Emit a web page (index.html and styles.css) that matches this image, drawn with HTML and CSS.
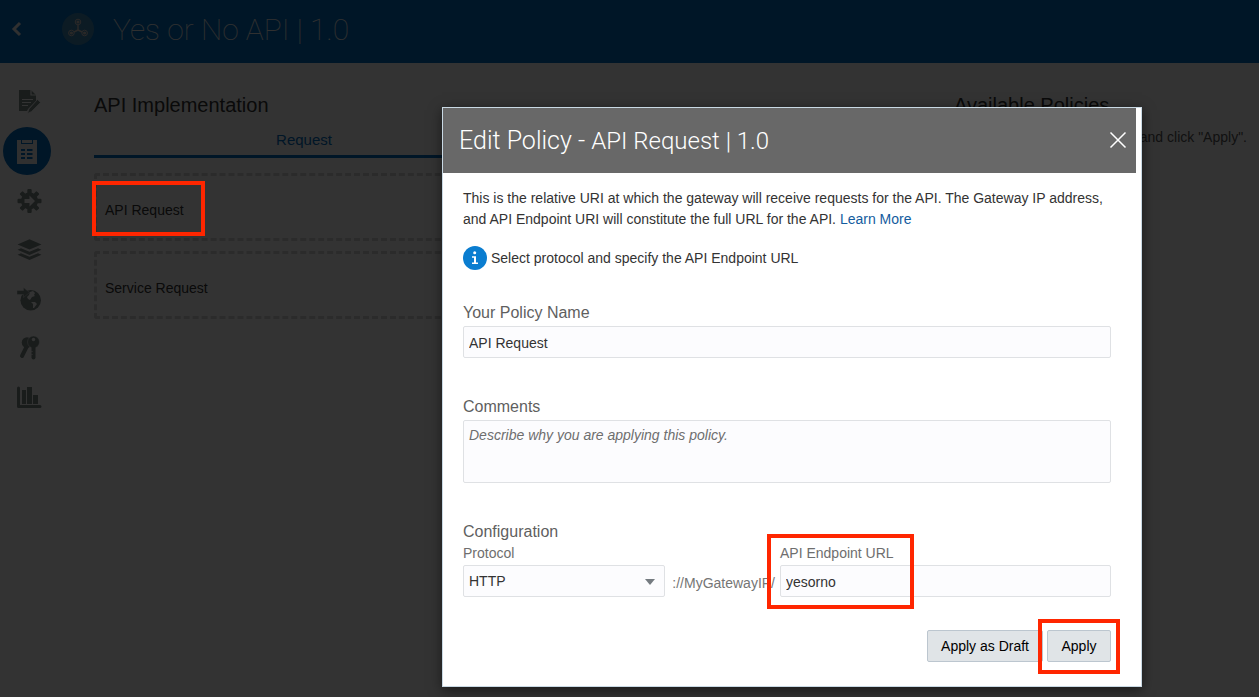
FILE: index.html
```html
<!DOCTYPE html>
<html lang="en">
<head>
<meta charset="utf-8">
<title>Yes or No API | 1.0</title>
<link rel="stylesheet" href="styles.css">
</head>
<body>
<div class="app">
  <header class="topbar">
    <button class="back" aria-label="Back">
      <svg width="12" height="16" viewBox="0 0 12 16"><path d="M10 2 4 8l6 6" fill="none" stroke="currentColor" stroke-width="3"/></svg>
    </button>
    <svg class="api-logo" width="32" height="32" viewBox="0 0 32 32">
      <circle cx="16" cy="16" r="16" fill="#3f86b4"/>
      <g fill="none" stroke="#d0c8c4">
        <path d="M16 12v5M16 17l-4 2M16 17l4 2" stroke-width="1.4"/>
        <circle cx="16" cy="9" r="2.8"/><circle cx="9.4" cy="20" r="2.8"/><circle cx="22.6" cy="20" r="2.8"/>
      </g>
      <g fill="#d0c8c4"><circle cx="16" cy="9" r="1.6"/><circle cx="9.4" cy="20" r="1.6"/><circle cx="22.6" cy="20" r="1.6"/></g>
    </svg>
    <h1 class="api-title">Yes or No API | 1.0</h1>
  </header>

  <div class="workspace">
    <nav class="rail" aria-label="API sections">
      <button class="rail-item" aria-label="Specification">
        <svg width="32" height="32" viewBox="0 0 32 32">
          <path d="M8 4h12l5 5v6l-8 8-1 2H8z" fill="currentColor"/>
          <path d="M20 4v5h5M11 13.500h11M11 16.500h9M11 19.500h6" fill="none" stroke="#fff" stroke-width="1.200"/>
          <path d="M26.500 13.500l3 3-9 9-4 2 1.500-4.500z" fill="currentColor" stroke="#fff" stroke-width=".7"/>
        </svg>
      </button>
      <button class="rail-item rail-item-active" aria-label="API Implementation" aria-current="page">
        <svg width="32" height="32" viewBox="0 0 32 32">
          <path d="M6 5h4v4h12V5h4v24H6z" fill="currentColor"/>
          <path d="M11 5h10v3H11z" fill="currentColor"/>
          <path d="M10 15h4M16 15h5.500M10 19h4M16 19h5.500M10 23h4M16 23h5.500" stroke="#006dc0" stroke-width="2"/>
        </svg>
      </button>
      <button class="rail-item" aria-label="Deployments">
        <svg width="32" height="32" viewBox="0 0 32 32">
          <g transform="translate(18.500 17)">
            <g fill="currentColor">
              <circle r="8.500"/>
              <g id="teeth"><rect x="-2.200" y="-12" width="4.400" height="24" rx="1"/><rect x="-12" y="-2.200" width="24" height="4.400" rx="1"/></g>
              <use href="#teeth" transform="rotate(45)"/>
            </g>
            <path d="M-5-2h5v-3.500L5.500 0 0 5.500V2h-5z" fill="#fff"/>
          </g>
        </svg>
      </button>
      <button class="rail-item" aria-label="Layers">
        <svg width="32" height="32" viewBox="0 0 32 32" fill="currentColor">
          <path d="M18.500 6.300l12 5.200-12 5-12-5z"/>
          <path d="M6.500 16.800l3.500-1.600 8.500 3.600 8.500-3.600 3.500 1.600-12 5.200z"/>
          <path d="M6.500 21.800l3.500-1.600 8.500 3.600 8.500-3.600 3.500 1.600-12 5.200z"/>
        </svg>
      </button>
      <button class="rail-item" aria-label="Publication">
        <svg width="32" height="32" viewBox="0 0 32 32">
          <circle cx="19.700" cy="18.200" r="10.300" fill="currentColor"/>
          <path d="M16 15l2-2 1-3 3-1 2 2-1 2 1 1-3 1-2 3-2-1zM20 20l4 0 2 2-3 4-1 0 0-4z" fill="#fff"/>
          <path d="M6 8.500h6.500V5.500l6 5-6 5v-3H6z" fill="currentColor" stroke="#fff" stroke-width=".4"/>
        </svg>
      </button>
      <button class="rail-item" aria-label="Grants">
        <svg width="32" height="32" viewBox="0 0 32 32">
          <path d="M16 15l-5 10" fill="none" stroke="currentColor" stroke-width="4" stroke-linecap="round"/>
          <circle cx="16" cy="11.500" r="5.300" fill="currentColor"/>
          <circle cx="22.500" cy="11" r="6" fill="currentColor" stroke="#fff" stroke-width=".5"/>
          <path d="M22.500 14v12.500" stroke="currentColor" stroke-width="4" stroke-linecap="round"/>
          <circle cx="22.500" cy="8.500" r="1.700" fill="#fff"/>
          <path d="M20.500 20.500h1M20.500 23.500h1" stroke="#fff"/>
        </svg>
      </button>
      <button class="rail-item" aria-label="Analytics">
        <svg width="32" height="32" viewBox="0 0 32 32">
          <path d="M7.500 8v18.500H29" fill="none" stroke="currentColor" stroke-width="3" stroke-linecap="round" stroke-linejoin="round"/>
          <path d="M11 10h4v14h-4zM16 7h5v17h-5zM22 15h5v9h-5z" fill="currentColor"/>
        </svg>
      </button>
    </nav>

    <main class="flow">
      <h2 class="section-title">API Implementation</h2>
      <div class="tabs"><button class="tab">Request</button></div>
      <div class="policies">
        <div class="policy">API Request<span class="highlight highlight-policy"></span></div>
        <div class="policy">Service Request</div>
      </div>
    </main>

    <aside class="available">
      <h2 class="section-title">Available Policies</h2>
      <p class="hint">Hover over a policy below and click "Apply".</p>
    </aside>
  </div>
</div>

<div class="backdrop"></div>

<section class="dialog" role="dialog" aria-labelledby="dialog-title">
  <div class="dialog-head">
    <h2 class="dialog-title" id="dialog-title">Edit Policy - <span class="dialog-subject">API Request | 1.0</span></h2>
    <button class="close" aria-label="Close">
      <svg width="18" height="18" viewBox="0 0 18 18"><path d="M1.500 1.500l15 15M16.500 1.500l-15 15" stroke="#fff" stroke-width="1.500"/></svg>
    </button>
  </div>
  <form class="dialog-body">
    <p class="intro">This is the relative URI at which the gateway will receive requests for the API. The Gateway IP address, and API Endpoint URI will constitute the full URL for the API. <a class="link" href="#">Learn More</a></p>
    <p class="notice">
      <svg width="24" height="24" viewBox="0 0 24 24"><circle cx="12" cy="12" r="12" fill="#0a7dd0"/><circle cx="11.700" cy="6.800" r="1.500" fill="#fff"/><path d="M9 10.200h4v6.300h2V18H9v-1.500h2v-4.800H9z" fill="#fff"/></svg>
      Select protocol and specify the API Endpoint URL
    </p>
    <div class="field">
      <label class="label" for="policy-name">Your Policy Name</label>
      <input class="control" id="policy-name" type="text" value="API Request">
    </div>
    <div class="field">
      <label class="label" for="comments">Comments</label>
      <textarea class="control control-area" id="comments" placeholder="Describe why you are applying this policy."></textarea>
    </div>
    <h3 class="label config-title">Configuration</h3>
    <div class="config">
      <div class="protocol">
        <label class="sublabel" for="protocol">Protocol</label>
        <div class="select-wrap">
          <select class="control control-select" id="protocol"><option>HTTP</option></select>
          <svg class="caret" width="10" height="6" viewBox="0 0 10 6"><path d="M0 0h10L5 6z" fill="#757b80"/></svg>
        </div>
      </div>
      <span class="host">://MyGatewayIP/</span>
      <div class="endpoint">
        <label class="sublabel" for="endpoint">API Endpoint URL</label>
        <input class="control" id="endpoint" type="text" value="yesorno">
        <span class="highlight highlight-endpoint"></span>
      </div>
    </div>
    <div class="actions">
      <button class="btn" type="button">Apply as Draft</button>
      <div class="apply-wrap">
        <button class="btn" type="button">Apply</button>
        <span class="highlight highlight-apply"></span>
      </div>
    </div>
  </form>
</section>
</body>
</html>
```

FILE: styles.css
```css
* { box-sizing: border-box; }

body {
  margin: 0;
  min-height: 100vh;
  background: #fff;
  color: #333;
  font: 14px/20px "Liberation Sans", Arial, sans-serif;
  position: relative;
}

h1, h2, h3, p { margin: 0; font-weight: 400; }
button, input, select, textarea { font: inherit; color: inherit; }
button { border: 0; background: none; padding: 0; cursor: pointer; }
svg { display: block; flex: none; }

/* Page behind the dialog */
.topbar {
  display: flex;
  align-items: center;
  height: 63px;
  padding: 0 10px 5px;
  background: #006dc0;
  color: #f0f0f0;
}
.back { margin-right: 40px; }
.api-title {
  margin-left: 19px;
  padding-top: 2px;
  font: 100 30px/36px Roboto, "Liberation Sans", sans-serif;
}
.workspace {
  display: grid;
  grid-template-columns: 91px minmax(0, 1fr) 293px;
  padding: 15px 12px 0 3px;
}
.rail { display: flex; flex-direction: column; gap: 1px; }
.rail-item {
  display: grid;
  place-items: center;
  width: 48px;
  height: 48px;
  border-radius: 50%;
  color: #7d8a88;
}
.rail-item-active { background: #006dc0; color: #f0f0f0; }

.flow { padding: 14px 20px 0 0; }
.section-title { font-size: 20px; line-height: 26px; }
.tabs {
  display: grid;
  grid-template-columns: 1fr 1fr;
  margin-top: 12px;
}
.tab {
  padding-bottom: 5px;
  border-bottom: 3px solid #006dc0;
  color: #006dc0;
  font-size: 15px;
  line-height: 20px;
}
.policies { display: grid; gap: 10px; margin-top: 15px; }
.policy {
  position: relative;
  display: flex;
  align-items: center;
  height: 68px;
  padding: 6px 8px 0;
  border: 3px dashed #d6d6d6;
  border-radius: 3px;
}
.available { padding-top: 14px; }
.hint {
  margin-top: 9px;
  color: #555;
  text-align: right;
  white-space: nowrap;
}

.backdrop {
  position: absolute;
  inset: 0;
  background: rgba(0, 0, 0, .8);
}

/* Callout frames */
.highlight {
  position: absolute;
  border: 4px solid #ff2600;
  pointer-events: none;
}
.highlight-policy { z-index: 1; left: -5px; top: 5px; width: 113px; height: 55px; }
.highlight-endpoint { left: -13px; top: -9px; width: 147px; height: 75px; }
.highlight-apply { inset: -11px -9px -12px; }

/* Dialog */
.dialog {
  position: absolute;
  top: 107px;
  left: 442px;
  width: 700px;
  border: 1px solid #c9d9e4;
  background: #fff;
  box-shadow: 0 3px 12px rgba(0, 0, 0, .5);
}
.dialog-head {
  display: flex;
  align-items: center;
  justify-content: space-between;
  height: 65px;
  margin-right: 5px;
  padding: 0 9px 2px 16px;
  background: #686868;
  color: #fff;
}
.dialog-title {
  padding-top: 2px;
  font: 300 25px/32px Roboto, "Liberation Sans", sans-serif;
}
.dialog-subject { font-size: 24px; }
.dialog-body { padding: 15px 30px 24px 20px; }
.intro { line-height: 21px; }
.link { color: #145c9e; text-decoration: none; }
.notice {
  display: flex;
  align-items: center;
  gap: 4px;
  margin: 16px 0 32px;
}
.field { margin-bottom: 38px; }
.label {
  display: block;
  margin-bottom: 2px;
  color: #5f5f5f;
  font-size: 16px;
  line-height: 22px;
}
.sublabel {
  display: block;
  margin-bottom: 2px;
  color: #6e6e6e;
}
.control {
  display: block;
  width: 100%;
  height: 32px;
  padding: 1px 5px 0;
  border: 1px solid #dfe1e4;
  border-radius: 2px;
  background: #fcfcfe;
  appearance: none;
}
.control-area {
  height: 63px;
  padding-top: 4px;
  resize: none;
}
.control-area::placeholder { color: #6e6e6e; font-style: italic; }
.control-select { padding-bottom: 2px; }
.config-title { margin-bottom: 0; }
.config { display: flex; align-items: flex-end; gap: 5px; }
.protocol { width: 202px; }
.select-wrap { position: relative; }
.caret { position: absolute; right: 10px; top: 14px; pointer-events: none; }
.host { min-width: 105px; padding-bottom: 4px; color: #757575; text-align: right; }
.endpoint { position: relative; flex: 1; }
.actions {
  display: flex;
  justify-content: flex-end;
  gap: 4px;
  margin-top: 33px;
}
.apply-wrap { position: relative; }
.btn {
  min-width: 64px;
  height: 32px;
  padding: 0 13px;
  border: 1px solid #bcc6cf;
  border-radius: 2px;
  background: #e0e4e7;
  color: #000;
}
```
